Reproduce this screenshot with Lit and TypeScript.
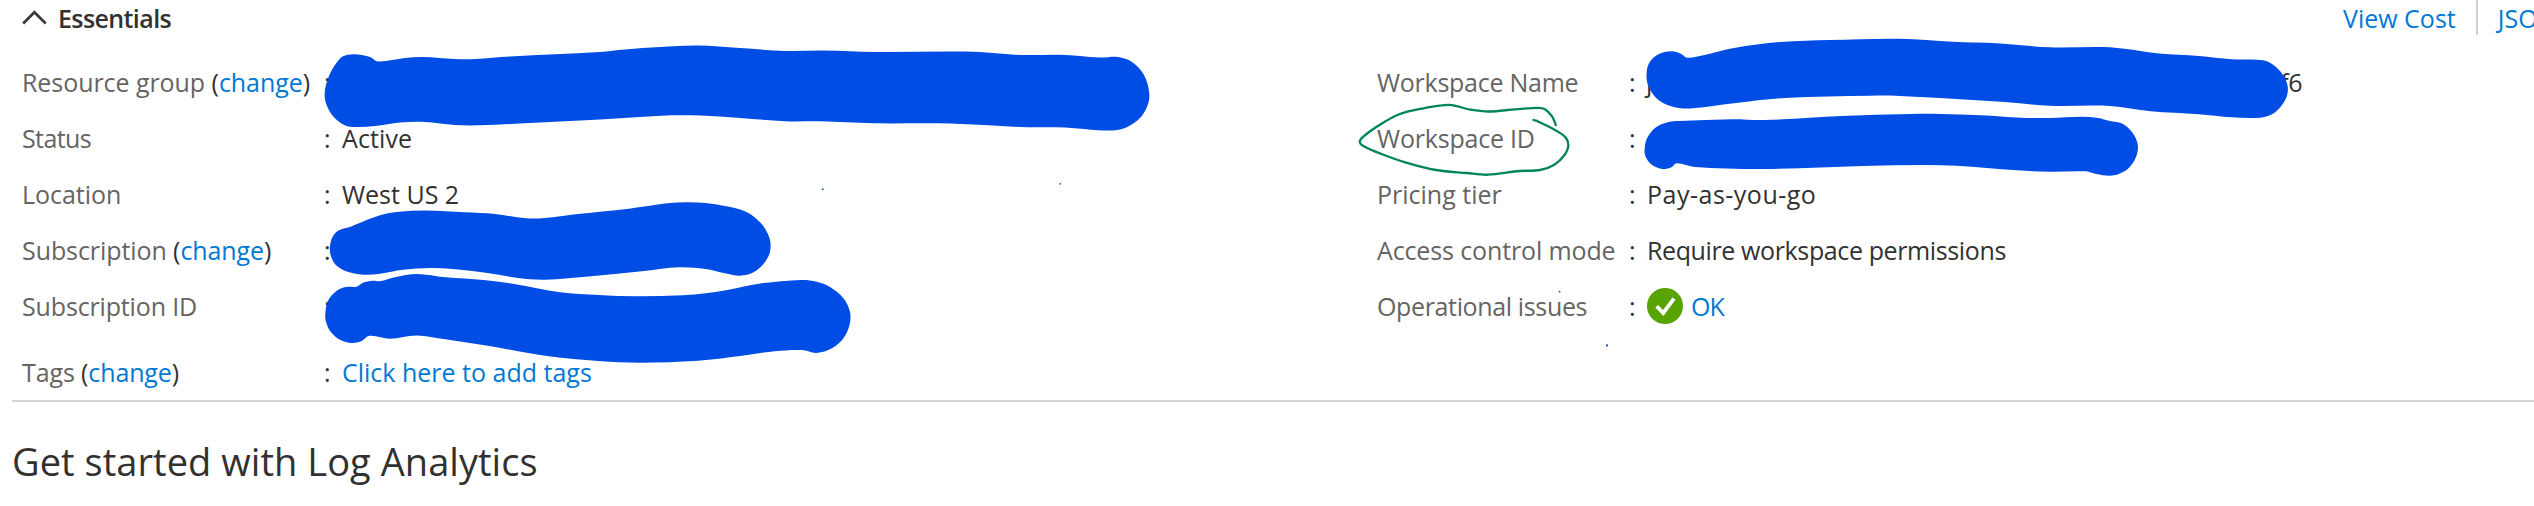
import { LitElement, html, svg, css, nothing } from "lit";
import { customElement } from "lit/decorators.js";

interface Item {
  label: string;
  spacing: number;
  change?: boolean;
  value?: unknown;
  tags?: boolean;
}

type Points = number[];

// Smooth curve through a flat list of x, y pairs (Catmull-Rom to Bezier).
function smooth(pts: Points, closed: boolean): string {
  const n = pts.length / 2;
  const at = (i: number): [number, number] => {
    const k = closed ? (i + n) % n : Math.max(0, Math.min(n - 1, i));
    return [pts[2 * k], pts[2 * k + 1]];
  };
  let d = `M${at(0).join(" ")}`;
  for (let i = 0; i < (closed ? n : n - 1); i++) {
    const [a, b, c, e] = [at(i - 1), at(i), at(i + 1), at(i + 2)];
    // Tangents are scaled by segment length so uneven spacing does not overshoot.
    const len = Math.hypot(c[0] - b[0], c[1] - b[1]);
    const t1 = Math.hypot(c[0] - a[0], c[1] - a[1]) || 1;
    const t2 = Math.hypot(e[0] - b[0], e[1] - b[1]) || 1;
    const k = len / 3;
    d += `C${b[0] + ((c[0] - a[0]) / t1) * k} ${b[1] + ((c[1] - a[1]) / t1) * k} ${
      c[0] - ((e[0] - b[0]) / t2) * k} ${c[1] - ((e[1] - b[1]) / t2) * k} ${c[0]} ${c[1]}`;
  }
  return closed ? d + "Z" : d;
}

const REDACTIONS: Points[] = [
  [324.6, 96, 329, 76, 340, 58.5, 348, 54.8, 356, 54.3, 370, 57, 378, 61.5, 405, 58, 423, 57, 455, 59, 475, 59, 510, 56.5, 600, 52, 625, 49.5, 660, 47, 698, 45.5, 740, 48, 785, 51, 825, 50.5, 875, 52, 950, 51.5, 980, 52, 1020, 55, 1060, 54.8, 1100, 57.5, 1118, 57, 1132, 62, 1144, 75, 1149.3, 93.5, 1147, 107, 1138, 120, 1122, 129, 1103, 130.5, 1065, 127.5, 1020, 127, 950, 123.5, 873, 123.3, 820, 121.3, 785, 121.2, 740, 118, 700, 115.5, 672, 115.3, 640, 117, 600, 119.5, 530, 123, 480, 125.3, 455, 125, 425, 122, 400, 122.5, 375, 126, 350, 126.7, 340, 122.5, 330, 112],
  [329.8, 250, 332, 238, 338, 230.7, 350, 227, 357, 224, 380, 215.3, 399.5, 211.7, 426, 210.5, 464.5, 212.3, 495, 214, 526, 218.3, 545, 218, 575.5, 214.3, 629, 208.7, 667, 203.3, 686.5, 202.3, 705.6, 203, 725, 206, 746, 211.7, 761, 223.3, 769.5, 238, 770, 251.7, 764, 263.3, 753.5, 272.3, 740, 275.7, 725, 273.3, 705.6, 269, 679, 267.3, 644, 271, 591, 276.3, 545, 279.7, 518, 278, 487.5, 273, 453, 269, 430, 268, 403, 269.7, 380, 273.7, 363, 274.7, 346, 271.3, 337, 266, 332.5, 260],
  [325.3, 315, 327.5, 301.7, 336.4, 291, 346, 287, 356.6, 286.7, 363, 282.7, 372.7, 280.7, 379.6, 281.3, 395.7, 277, 416.7, 274, 445.4, 277.3, 483.7, 280, 514, 284, 560, 292.3, 598.5, 295, 636.8, 296.3, 682.7, 295.3, 705.7, 293.3, 728.6, 289.7, 759, 283.7, 801, 280, 816.6, 281.7, 830, 287, 843.4, 298.3, 850, 312, 849.5, 325, 843.4, 338.3, 832, 348.3, 816.6, 352.9, 802, 350, 774.5, 351.3, 740, 356, 698, 360.7, 640.6, 362.7, 598.5, 361, 548.7, 356.3, 491, 346.3, 445.4, 339.3, 416.7, 335.5, 390, 338.7, 369.6, 335.7, 361, 341.3, 351.7, 343, 340, 339.7, 330.6, 331.7, 326, 322],
  [1646.5, 76, 1649, 63.3, 1658.4, 54.3, 1671.4, 51.3, 1680.8, 53.7, 1687.3, 57.7, 1703.3, 55.3, 1733.9, 48, 1780.8, 42, 1829.8, 40, 1900, 38.7, 1952.6, 41.7, 1997, 43.3, 2049.6, 47.3, 2110, 47.3, 2158.8, 53.5, 2199, 56, 2231.6, 59.3, 2260, 60, 2270, 62.7, 2280, 71, 2287, 83.3, 2287.4, 94, 2282, 105, 2272, 114.3, 2260, 117.7, 2231.6, 117.3, 2199, 114.3, 2150.7, 111.3, 2110, 106, 2049.6, 105.7, 2005, 102, 1940, 98, 1900, 95.9, 1870.6, 95.7, 1785, 98, 1736, 103, 1693, 108.3, 1674.7, 107.3, 1658.4, 100, 1649, 87.5],
  [1644.6, 150, 1647, 138.3, 1656, 127.3, 1668.6, 122, 1678.8, 121, 1732, 119.3, 1764.5, 120, 1842, 116, 1911.4, 114, 1940.4, 114, 1981, 115.3, 2021, 117.7, 2049.6, 118, 2082, 116.7, 2098, 118, 2110, 121, 2122, 123.5, 2132.5, 132.7, 2137.8, 145, 2136, 157, 2128.5, 168.3, 2118, 174.3, 2109.5, 175.7, 2096, 174, 2086, 171.3, 2049.6, 171.7, 2017, 170.3, 1956.6, 165.8, 1924, 165, 1862.4, 166, 1764.5, 169, 1695, 167, 1676.7, 163.3, 1671.4, 167.3, 1662.4, 169, 1652.2, 165, 1646, 157.5],
];

const CIRCLE: Points = [1555.8, 125, 1552.2, 116.7, 1545, 109.3, 1538, 107.9, 1515.5, 109.3, 1489, 111.5, 1470.6, 109.7, 1449.4, 104.9, 1423.7, 108.3, 1399.2, 114.3, 1376.7, 126.7, 1363.3, 136.7, 1359.8, 141.7, 1363.3, 146, 1380.8, 153.7, 1405.3, 162.3, 1436, 170, 1466.5, 173, 1487.8, 174.7, 1519.6, 171, 1540, 170, 1554.3, 164.7, 1564.5, 155, 1568.3, 145, 1564.5, 136.3, 1550, 127.3, 1538, 121.5, 1533.5, 120];

const LEFT: Item[] = [
  { label: "Resource group", spacing: -0.06, change: true },
  { label: "Status", spacing: -0.6, value: html`<span style="letter-spacing:0.1px">Active</span>` },
  { label: "Location", spacing: -0.03, value: html`West US 2` },
  { label: "Subscription", spacing: -0.08, change: true },
  { label: "Subscription ID", spacing: -0.15 },
  { label: "Tags", spacing: -0.12, change: true, tags: true, value: html`<a class="link">Click here to add tags</a>` },
];

const check = html`<svg class="ok-icon" viewBox="0 0 36 36">
  <circle cx="18" cy="18" r="18" fill="#57a300"></circle>
  <path d="M9.7 18.2L16.2 25L27 10.7" fill="none" stroke="#fff" stroke-width="3.8"></path>
</svg>`;

const RIGHT: Item[] = [
  { label: "Workspace Name", spacing: -0.26, value: html`<span class="masked"><span>j</span><span class="tail">f6</span></span>` },
  { label: "Workspace ID", spacing: -0.2 },
  { label: "Pricing tier", spacing: 0, value: html`<span style="letter-spacing:0.5px">Pay-as-you-go</span>` },
  { label: "Access control mode", spacing: -0.13, value: html`<span style="letter-spacing:-0.38px">Require workspace permissions</span>` },
  { label: "Operational issues", spacing: -0.36, value: html`${check}<a class="link ok">OK</a>` },
];

@customElement("app-root")
export class AppRoot extends LitElement {
  static styles = css`
    :host {
      display: block;
      position: relative;
      width: 100%;
      height: 506px;
      overflow: hidden;
      background: #fff;
      color: #323130;
      font: 25px/36px "Open Sans", "Noto Sans", sans-serif;
      white-space: nowrap;
    }
    .link { color: #0078d4; }
    .header {
      display: flex;
      height: 54px;
      padding-left: 22px;
      align-items: flex-start;
    }
    .chevron { width: 25px; height: 36px; flex: none; }
    .title { margin-left: 11px; font-weight: 600; letter-spacing: -0.6px; }
    .actions { display: flex; flex: none; width: 191px; margin-left: auto; }
    .json { margin-left: 20px; padding-left: 20px; border-left: 2px solid #d2d2d2; height: 35px; }
    .columns { display: grid; grid-template-columns: 1355px 1fr; padding-left: 22px; height: 346px; }
    .row { display: grid; height: 56px; align-items: center; grid-template-columns: 302px 18px 1fr; }
    .right .row { grid-template-columns: 252px 18px 1fr; }
    .tags { margin-top: 10px; }
    .label { color: #666462; }
    .paren { color: #323130; }
    .value { display: flex; align-items: center; }
    .ok-icon { width: 36px; height: 36px; margin-right: 8px; }
    .ok { letter-spacing: -0.9px; }
    .masked { display: flex; justify-content: space-between; width: 656px; margin-left: -1px; }
    .tail { letter-spacing: -0.5px; }
    .rule { height: 2px; margin-left: 12px; background: #d4d4d4; }
    .heading { margin: 31px 0 0 12px; font-size: 38px; font-weight: 400; line-height: 56px; letter-spacing: 0.05px; }
    .ink { position: absolute; left: 0; top: 0; width: 2534px; height: 506px; pointer-events: none; }
  `;

  private row(item: Item) {
    return html`<div class="row ${item.tags ? "tags" : ""}">
      <div class="label" style="letter-spacing:${item.spacing}px">${item.label}${item.change
        ? html` <span class="paren">(</span><a class="link">change</a><span class="paren">)</span>`
        : nothing}</div>
      <div>:</div>
      <div class="value">${item.value ?? nothing}</div>
    </div>`;
  }

  render() {
    return html`
      <div class="header">
        <svg class="chevron" viewBox="0 0 25 36">
          <path d="M1.2 23.5L12.4 12.2L23.7 23.5" fill="none" stroke="#3b3a39" stroke-width="2.7"></path>
        </svg>
        <div class="title">Essentials</div>
        <div class="actions">
          <a class="link">View Cost</a>
          <a class="link json">JSON View</a>
        </div>
      </div>
      <div class="columns">
        <div>${LEFT.map((i) => this.row(i))}</div>
        <div class="right">${RIGHT.map((i) => this.row(i))}</div>
      </div>
      <div class="rule"></div>
      <h2 class="heading">Get started with Log Analytics</h2>
      <svg class="ink" viewBox="0 0 2534 506">
        ${REDACTIONS.map((p) => svg`<path d=${smooth(p, true)} fill="#004de6"></path>`)}
        <path d=${smooth(CIRCLE, false)} fill="none" stroke="#008557" stroke-width="2.3" stroke-linecap="round"></path>
        <circle cx="822.8" cy="189.3" r="1" fill="#008557"></circle>
        <circle cx="1060.3" cy="183.8" r="0.9" fill="#008557"></circle>
        <circle cx="1559.6" cy="291.6" r="0.9" fill="#004de6"></circle>
        <circle cx="1607" cy="345.4" r="1.1" fill="#004de6"></circle>
      </svg>
    `;
  }
}
